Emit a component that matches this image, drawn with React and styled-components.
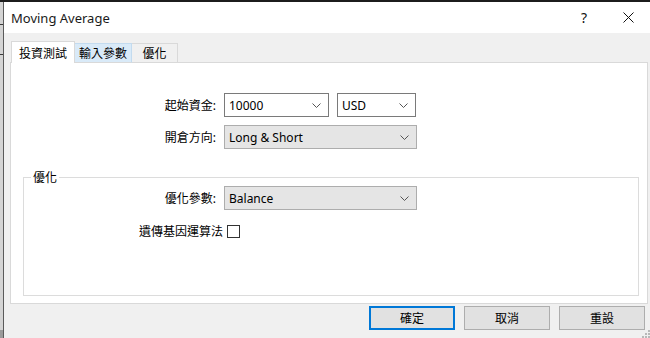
import styled, { createGlobalStyle } from "styled-components";

const GlobalStyle = createGlobalStyle`
	html, body {
		margin: 0;
		padding: 0;
		background: #f0f0f0;
		overflow: hidden;
	}
	* {
		box-sizing: border-box;
	}
`;

const ui = `"Noto Sans", "Noto Sans CJK TC", sans-serif`;

const Screen = styled.div`
	display: flex;
	width: 650px;
	height: 338px;
	border-top: 2px solid #1c1c1c;
	font-family: ${ui};
	font-size: 12px;
	color: #000;
`;

const Edge = styled.div`
	width: 4px;
	background: linear-gradient(#d4d4d4 0 22px, #3a3a3a 22px 23px, #d4d4d4 23px 52px, #3a3a3a 52px 53px, #d4d4d4 53px 328px, #9a9a9a 328px);
	border-right: 1px solid #5a5a5a;
`;

const Window = styled.div`
	position: relative;
	flex: 1;
	display: flex;
	flex-direction: column;
	background: #f0f0f0;
`;

const TitleBar = styled.div`
	height: 31px;
	display: flex;
	align-items: center;
	background: #fff;
	padding-left: 7px;
`;

const Title = styled.span`
	flex: 1;
	font-size: 13px;
	color: #1a1a1a;
`;

const TitleButton = styled.span`
	width: 44px;
	display: flex;
	justify-content: center;
	align-items: center;
	font-size: 14px;
	color: #111;
`;

const Body = styled.div`
	flex: 1;
	display: flex;
	flex-direction: column;
	padding: 8px 2px 0 6px;
`;

const Tabs = styled.div`
	display: flex;
	align-items: flex-end;
	height: 22px;
	padding-left: 1px;
	margin-bottom: -1px;
	position: relative;
	z-index: 1;
`;

const Tab = styled.div`
	height: ${(p) => (p.$active ? "22px" : "20px")};
	min-width: 46px;
	padding: 0 ${(p) => (p.$active ? "7px" : "4px")};
	display: flex;
	align-items: center;
	justify-content: center;
	border: 1px solid ${(p) => (p.$hover ? "#c3dbef" : "#d9d9d9")};
	border-bottom: ${(p) => (p.$active ? "none" : "1px solid #d9d9d9")};
	border-left: ${(p) => (p.$active ? "" : "none")};
	background: ${(p) => (p.$active ? "#fff" : p.$hover ? "#d9eaf8" : "#f0f0f0")};
	font-size: 12px;
`;

const Panel = styled.div`
	height: 242px;
	background: #fff;
	border: 1px solid #d9d9d9;
	padding: 30px 8px 0 12px;
	display: flex;
	flex-direction: column;
	gap: 8px;
`;

const Row = styled.div`
	display: flex;
	align-items: center;
	gap: ${(p) => p.$gap || 8}px;
`;

const Label = styled.span`
	width: ${(p) => p.$w}px;
	text-align: right;
	font-size: 12px;
	white-space: nowrap;
`;

const Combo = styled.div`
	width: ${(p) => p.$w}px;
	height: 24px;
	display: flex;
	align-items: center;
	justify-content: space-between;
	padding: 0 7px 0 4px;
	background: ${(p) => (p.$flat ? "#e5e5e5" : "#fff")};
	border: 1px solid ${(p) => (p.$flat ? "#adadad" : "#7a7a7a")};
	font-size: 12px;
`;

const Group = styled.fieldset`
	margin: 11px 0 0 0;
	padding: 0;
	height: 128px;
	border: 1px solid #dcdcdc;
	display: flex;
	flex-direction: column;
	gap: 12px;
`;

const Legend = styled.legend`
	margin-left: 7px;
	padding: 0 2px;
	font-size: 12px;
`;

const Box = styled.span`
	width: 13px;
	height: 13px;
	border: 1px solid #333;
	background: #fff;
`;

const Buttons = styled.div`
	display: flex;
	justify-content: flex-end;
	gap: 9px;
	padding: 2px 3px 0 0;
`;

const Button = styled.div`
	width: 86px;
	height: 24px;
	display: flex;
	align-items: center;
	justify-content: center;
	background: #e1e1e1;
	border: ${(p) => (p.$default ? "2px solid #0078d7" : "1px solid #adadad")};
	font-size: 12px;
`;

const Grip = styled.svg`
	position: absolute;
	right: 0;
	bottom: 0;
`;

function Chevron() {
	return (
		<svg width="9" height="5" viewBox="0 0 9 5">
			<path d="M0.5 0.5 L4.5 4.5 L8.5 0.5" fill="none" stroke="#555" strokeWidth="1" />
		</svg>
	);
}

function Select({ value, width, flat }) {
	return (
		<Combo $w={width} $flat={flat}>
			<span>{value}</span>
			<Chevron />
		</Combo>
	);
}

export default function App() {
	return (
		<>
			<GlobalStyle />
			<Screen>
				<Edge />
				<Window>
					<TitleBar>
						<Title>Moving Average</Title>
						<TitleButton>?</TitleButton>
						<TitleButton>
							<svg width="11" height="11" viewBox="0 0 11 11">
								<path d="M0.5 0.5 L10.5 10.5 M10.5 0.5 L0.5 10.5" stroke="#111" strokeWidth="1" />
							</svg>
						</TitleButton>
					</TitleBar>
					<Body>
						<Tabs>
							<Tab $active>投資測試</Tab>
							<Tab $hover>輸入參數</Tab>
							<Tab>優化</Tab>
						</Tabs>
						<Panel>
							<Row>
								<Label $w={193}>起始資金:</Label>
								<Select value="10000" width={105} />
								<Select value="USD" width={79} />
							</Row>
							<Row>
								<Label $w={193}>開倉方向:</Label>
								<Select value="Long & Short" width={193} flat />
							</Row>
							<Group>
								<Legend>優化</Legend>
								<Row>
									<Label $w={192}>優化參數:</Label>
									<Select value="Balance" width={193} flat />
								</Row>
								<Row $gap={4}>
									<Label $w={199}>遺傳基因運算法</Label>
									<Box />
								</Row>
							</Group>
						</Panel>
						<Buttons>
							<Button $default>確定</Button>
							<Button>取消</Button>
							<Button>重設</Button>
						</Buttons>
					</Body>
					<Grip width="8" height="8" viewBox="0 0 8 8">
						<rect x="6" y="0" width="2" height="2" fill="#b8b8b8" />
						<rect x="3" y="3" width="2" height="2" fill="#b8b8b8" />
						<rect x="6" y="3" width="2" height="2" fill="#b8b8b8" />
						<rect x="0" y="6" width="2" height="2" fill="#b8b8b8" />
						<rect x="3" y="6" width="2" height="2" fill="#b8b8b8" />
						<rect x="6" y="6" width="2" height="2" fill="#b8b8b8" />
					</Grip>
				</Window>
			</Screen>
		</>
	);
}
